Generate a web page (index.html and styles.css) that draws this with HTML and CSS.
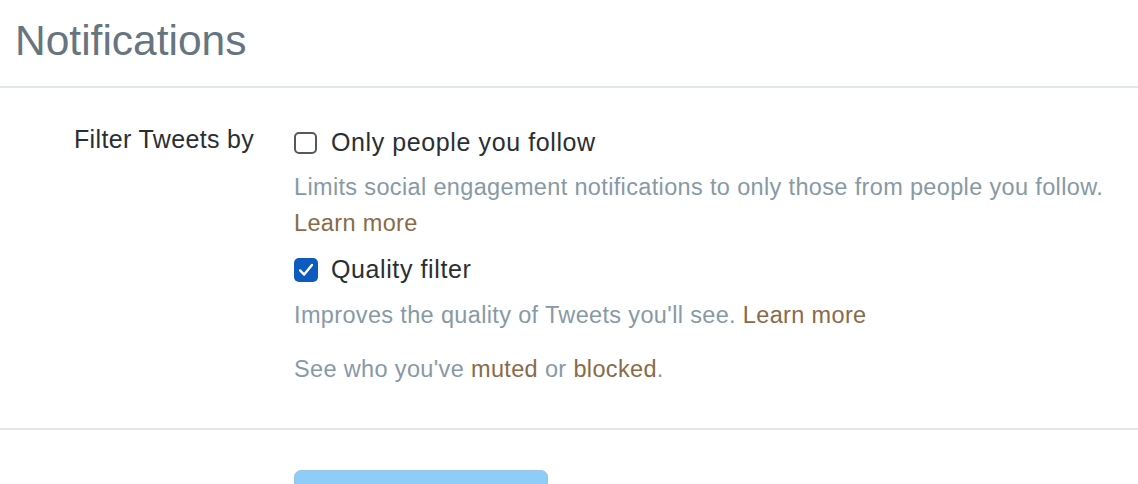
FILE: index.html
```html
<!DOCTYPE html>
<html lang="en">
<head>
<meta charset="utf-8">
<title>Notifications</title>
<link rel="stylesheet" href="styles.css">
</head>
<body>
  <header class="page-header">
    <h1 class="title">Notifications</h1>
  </header>
  <section class="settings">
    <div class="setting-row">
      <div class="setting-label">Filter Tweets by</div>
      <div class="setting-controls">
        <label class="option">
          <span class="box"></span>
          <span class="option-text">Only people you follow</span>
        </label>
        <p class="desc">Limits social engagement notifications to only those from people you follow. <a class="link" href="#">Learn more</a></p>
        <label class="option option-second">
          <span class="box box-checked">
            <svg class="check" viewBox="0 0 24 24" width="22" height="22" aria-hidden="true"><path d="M5.5 12.5l4.5 4.5L18.5 6.5" fill="none" stroke="#fff" stroke-width="2.6" stroke-linecap="round" stroke-linejoin="round"/></svg>
          </span>
          <span class="option-text">Quality filter</span>
        </label>
        <p class="desc">Improves the quality of Tweets you'll see. <a class="link" href="#">Learn more</a></p>
        <p class="desc desc-last">See who you've <a class="link" href="#">muted</a> or <a class="link" href="#">blocked</a>.</p>
      </div>
    </div>
  </section>
  <footer class="actions">
    <button class="save-btn" type="button"></button>
  </footer>
</body>
</html>
```

FILE: styles.css
```css
html, body {
  margin: 0;
  padding: 0;
  background: #ffffff;
}

body {
  font-family: "Liberation Sans", Arial, Helvetica, sans-serif;
  overflow: hidden;
}

.page-header {
  height: 86px;
  border-bottom: 2px solid #e1e8ed;
  box-sizing: content-box;
}

.title {
  margin: 0;
  padding: 16px 0 0 15px;
  font-size: 42.5px;
  font-weight: normal;
  line-height: 50px;
  color: #66757f;
}

.settings {
  padding: 37px 0 41px;
  border-bottom: 2px solid #e6e6e6;
}

.setting-row {
  display: flex;
}

.setting-label {
  width: 294px;
  padding-left: 74px;
  box-sizing: border-box;
  flex: none;
  font-size: 25px;
  line-height: 34px;
  letter-spacing: 0.35px;
  color: #292f33;
  margin-top: -3px;
  white-space: nowrap;
}

.setting-controls {
  flex: 1;
}

.option {
  display: flex;
  align-items: center;
  height: 34px;
  font-size: 25px;
  line-height: 34px;
  letter-spacing: 0.6px;
  color: #292f33;
}

.option-second {
  margin-top: 11px;
}

.box {
  width: 23px;
  height: 22px;
  box-sizing: border-box;
  border: 2px solid #55595c;
  border-radius: 5px;
  margin-right: 14px;
  flex: none;
  display: flex;
  align-items: center;
  justify-content: center;
  margin-top: 2px;
}

.box-checked {
  width: 24px;
  height: 24px;
  border: none;
  background: #0d5bbf;
  border-radius: 5px;
  margin-right: 13px;
}

.check {
  flex: none;
  display: block;
}

.desc {
  margin: 10px 0 0;
  font-size: 23.5px;
  line-height: 36px;
  letter-spacing: 0.35px;
  color: #8899a6;
  max-width: 830px;
}

.option-second + .desc {
  margin-top: 11px;
}

.desc-last {
  margin-top: 18px;
}

.link {
  color: #8a6a48;
  text-decoration: none;
}

.actions {
  padding: 40px 0 0 294px;
}

.save-btn {
  display: block;
  width: 254px;
  height: 44px;
  background: #8ecdf8;
  border: 1px solid #9cc3e2;
  border-radius: 7px;
  padding: 0;
}
```
